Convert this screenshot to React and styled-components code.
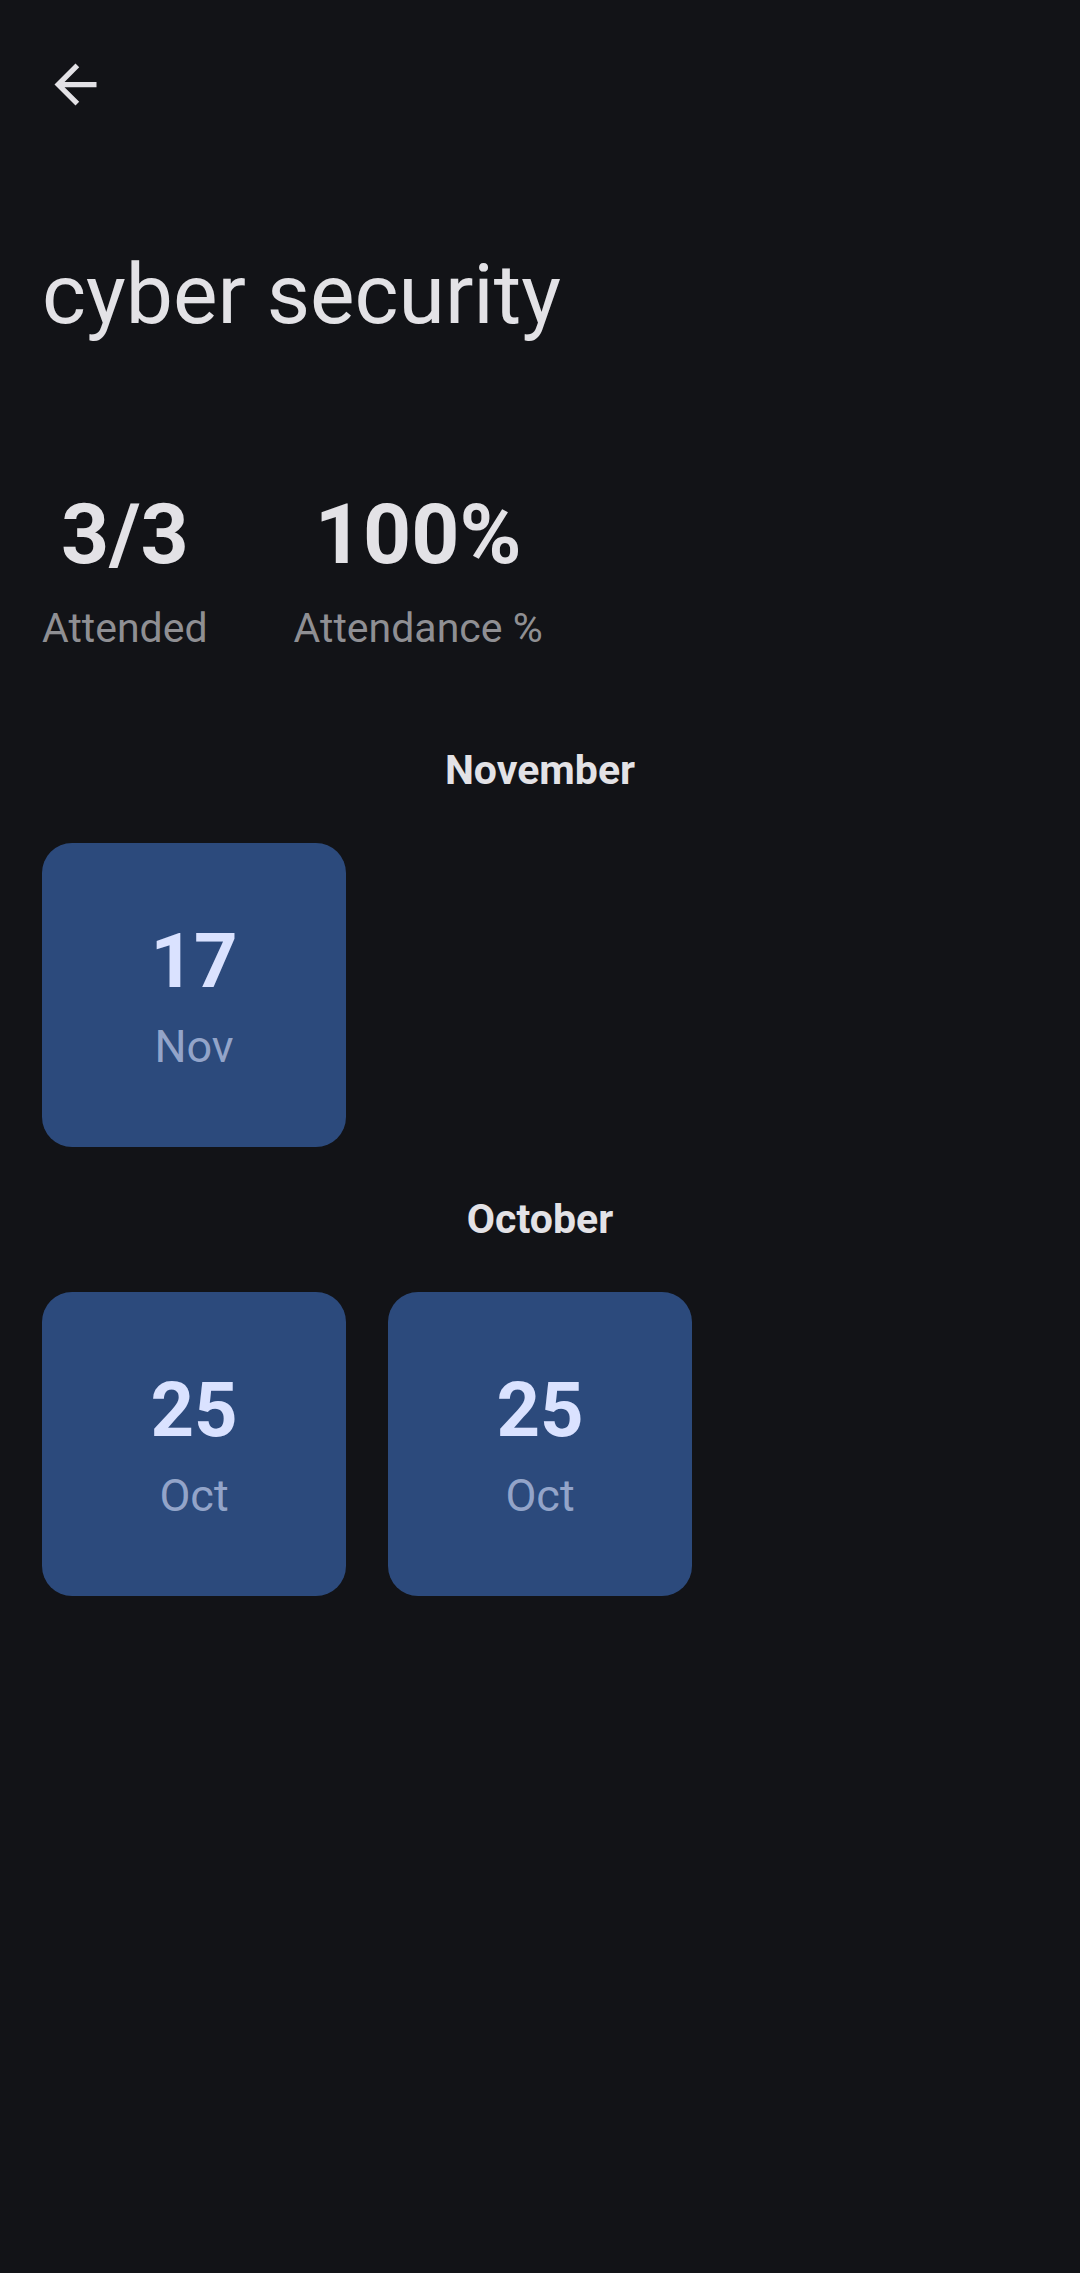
import React from 'react'
import styled, { createGlobalStyle } from 'styled-components'

const GlobalStyle = createGlobalStyle`
    body {
        margin: 0;
        background-color: #121317;
        font-family: Roboto, "Noto Sans", "Liberation Sans", sans-serif;
    }
`;

const months = [
    {
        name: 'November',
        days: [{ day: '17', month: 'Nov' }],
    },
    {
        name: 'October',
        days: [
            { day: '25', month: 'Oct' },
            { day: '25', month: 'Oct' },
        ],
    },
]

export default function App() {
  return (
    <Page>
        <GlobalStyle />
        <TopBar>
            <BackButton aria-label="back">
                <svg width="63" height="63" viewBox="0 0 24 24" fill="#e3e2e6">
                    <path d="M20 11H7.83l5.59-5.59L12 4l-8 8 8 8 1.41-1.41L7.83 13H20v-2z" />
                </svg>
            </BackButton>
        </TopBar>
        <Content>
            <Title>cyber security</Title>
            <Stats>
                <StatItem>
                    <StatValue>3/3</StatValue>
                    <StatLabel>Attended</StatLabel>
                </StatItem>
                <StatItem>
                    <StatValue>100%</StatValue>
                    <StatLabel>Attendance %</StatLabel>
                </StatItem>
            </Stats>
            {months.map((m, i) => (
                <MonthSection key={m.name} first={i === 0}>
                    <MonthTitle>{m.name}</MonthTitle>
                    <DayGrid>
                        {m.days.map((d, j) => (
                            <DayCard key={j}>
                                <DayNumber>{d.day}</DayNumber>
                                <DayMonth>{d.month}</DayMonth>
                            </DayCard>
                        ))}
                    </DayGrid>
                </MonthSection>
            ))}
        </Content>
    </Page>
  )
}

const Page = styled.div`
    min-height: 100vh;
    background-color: #121317;
    color: #e3e2e6;
`;

const TopBar = styled.div`
    height: 168px;
    display: flex;
    align-items: center;
    padding-left: 12px;
`;

const BackButton = styled.button`
    width: 126px;
    height: 126px;
    display: flex;
    align-items: center;
    justify-content: center;
    background: none;
    border: none;
    padding: 0;
    cursor: pointer;
`;

const Content = styled.div`
    padding: 0 42px;
`;

const Title = styled.h1`
    margin: 77px 0 0 0;
    font-size: 84px;
    line-height: 100px;
    font-weight: 400;
    color: #e3e2e6;
`;

const Stats = styled.div`
    display: flex;
    gap: 86px;
    margin-top: 140px;
`;

const StatItem = styled.div`
    display: flex;
    flex-direction: column;
    align-items: center;
`;

const StatValue = styled.div`
    font-size: 84px;
    line-height: 100px;
    font-weight: 700;
    color: #e3e2e6;
`;

const StatLabel = styled.div`
    margin-top: 18px;
    font-size: 41px;
    line-height: 50px;
    color: #8f8f93;
`;

const MonthSection = styled.section`
    margin-top: ${props => (props.first ? '92px' : '47px')};
`;

const MonthTitle = styled.h2`
    margin: 0;
    text-align: center;
    font-size: 41px;
    line-height: 50px;
    font-weight: 700;
    color: #e3e2e6;
`;

const DayGrid = styled.div`
    display: grid;
    grid-template-columns: repeat(3, 1fr);
    gap: 42px;
    margin-top: 48px;
`;

const DayCard = styled.div`
    aspect-ratio: 1;
    border-radius: 30px;
    background-color: #2c4a7c;
    display: flex;
    flex-direction: column;
    align-items: center;
    justify-content: center;
    gap: 14px;
`;

const DayNumber = styled.div`
    font-size: 76px;
    line-height: 90px;
    font-weight: 700;
    color: #dae2ff;
`;

const DayMonth = styled.div`
    font-size: 45px;
    line-height: 54px;
    color: rgba(218, 226, 255, 0.6);
`;
